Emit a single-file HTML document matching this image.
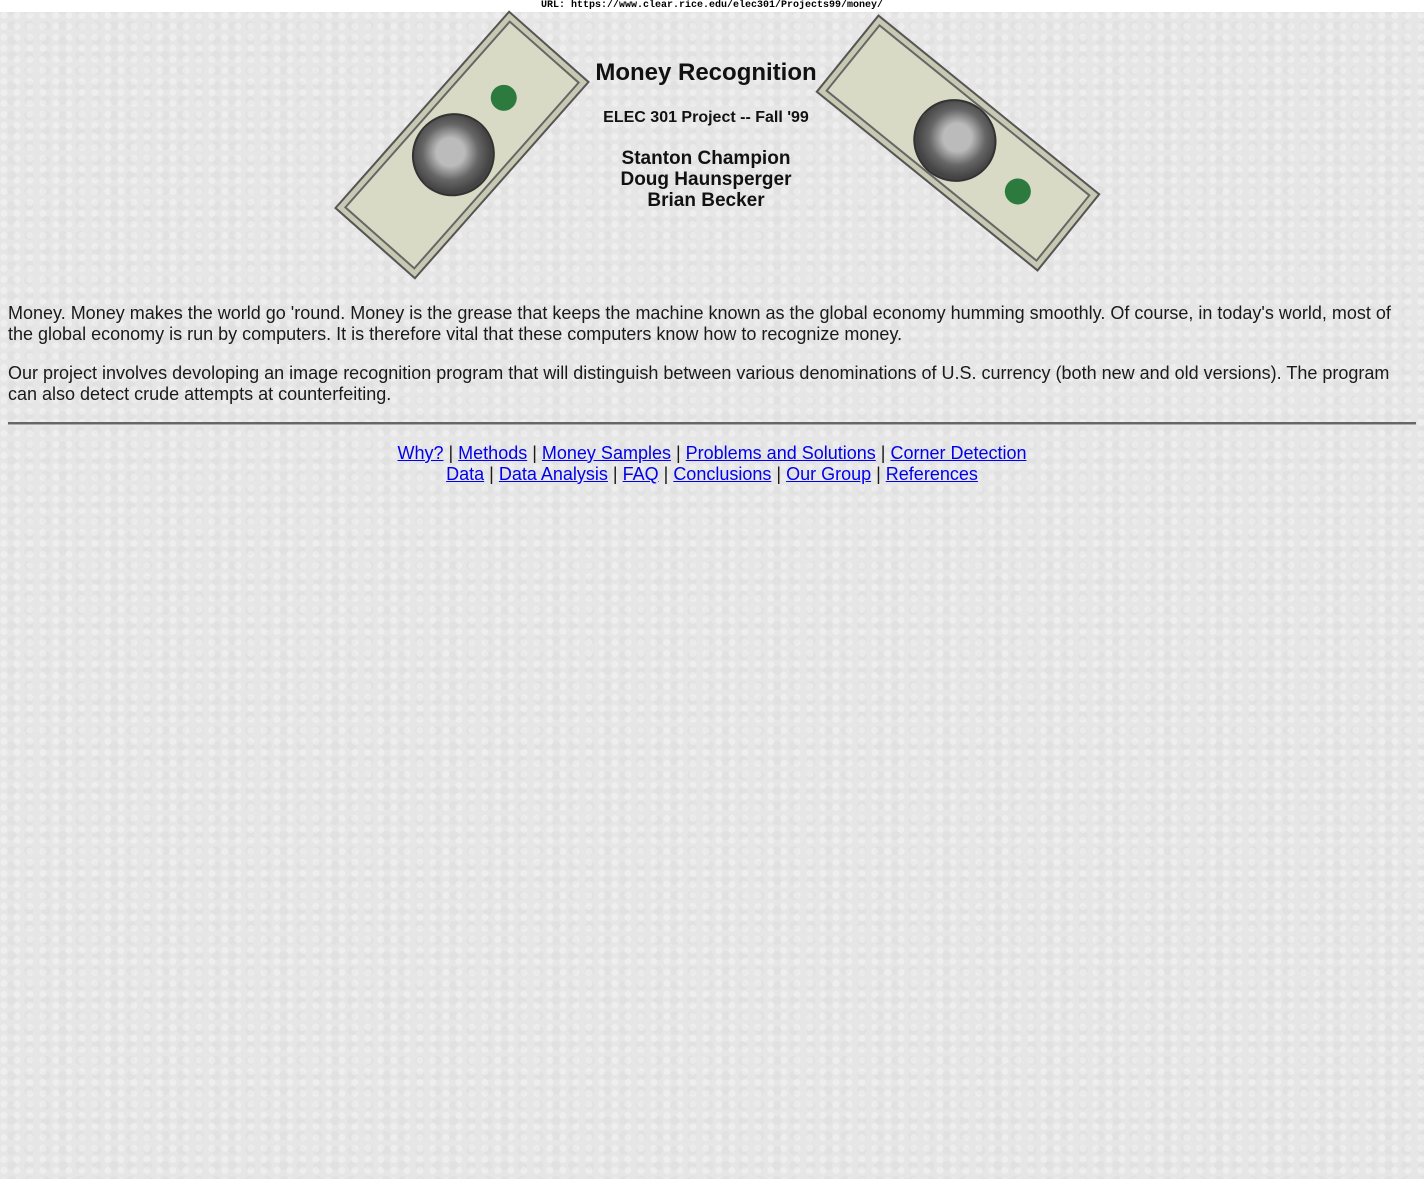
<!DOCTYPE html>
<html><head><style>
html,body{margin:0;padding:0}
body{width:1424px;height:1179px;background:#e6e6e6;font-family:"Liberation Sans",sans-serif;color:#1a1a1a;position:relative;overflow:hidden;
background-image:radial-gradient(circle at 30% 40%,rgba(255,255,255,.3) 0 3px,transparent 4px),radial-gradient(circle at 70% 70%,rgba(0,0,0,.025) 0 4px,transparent 5px);background-size:13px 11px,17px 15px}
.url{position:absolute;left:0;top:0;width:1424px;height:12px;background:#fff;text-align:center;font:bold 10px/12px "Liberation Mono",monospace;color:#000}
.bill{position:absolute;background:#d9dac6;border:2px solid #555;box-shadow:inset 0 0 0 5px #c8c9b2,inset 0 0 0 7px #666}
.bill .oval{position:absolute;width:80px;height:78px;border-radius:50%;background:radial-gradient(circle at 50% 45%,#bbb 0 14px,#666 28px,#444 40px);border:2px solid #333;top:50%;margin-top:-41px}
.bill .seal{position:absolute;width:26px;height:26px;border-radius:50%;background:#2d7a3f;top:50%;margin-top:-13px}
.t{position:absolute;left:0;width:1412px;text-align:center;font-weight:bold;color:#111}
p{position:absolute;left:8px;width:1400px;margin:0;font-size:18px;line-height:21px}
hr{position:absolute;left:8px;top:422px;width:1408px;margin:0;border:0;border-top:2px solid #666;border-bottom:1px solid #aaa}
.links{position:absolute;top:443px;left:0;width:1424px;text-align:center;font-size:18px;line-height:21px}
a{color:#00e}
</style></head><body>
<div class="url">URL: https://www.clear.rice.edu/elec301/Projects99/money/</div>
<div class="bill" style="left:330px;top:91px;width:260px;height:104px;transform:rotate(-48.5deg)"><div class="oval" style="left:75px"></div><div class="seal" style="left:180px"></div></div>
<div class="bill" style="left:815px;top:93px;width:282px;height:96px;transform:rotate(39deg)"><div class="oval" style="left:95px"></div><div class="seal" style="left:205px"></div></div>
<div class="t" style="top:59px;font-size:24px">Money Recognition</div>
<div class="t" style="top:109px;font-size:16px">ELEC 301 Project -- Fall '99</div>
<div class="t" style="top:148px;font-size:19px;line-height:21px">Stanton Champion<br>Doug Haunsperger<br>Brian Becker</div>
<p style="top:303px">Money. Money makes the world go 'round. Money is the grease that keeps the machine known as the global economy humming smoothly. Of course, in today's world, most of the global economy is run by computers. It is therefore vital that these computers know how to recognize money.</p>
<p style="top:363px">Our project involves devoloping an image recognition program that will distinguish between various denominations of U.S. currency (both new and old versions). The program can also detect crude attempts at counterfeiting.</p>
<hr>
<div class="links"><a href="#">Why?</a> | <a href="#">Methods</a> | <a href="#">Money Samples</a> | <a href="#">Problems and Solutions</a> | <a href="#">Corner Detection</a><br><a href="#">Data</a> | <a href="#">Data Analysis</a> | <a href="#">FAQ</a> | <a href="#">Conclusions</a> | <a href="#">Our Group</a> | <a href="#">References</a></div>
</body></html>
